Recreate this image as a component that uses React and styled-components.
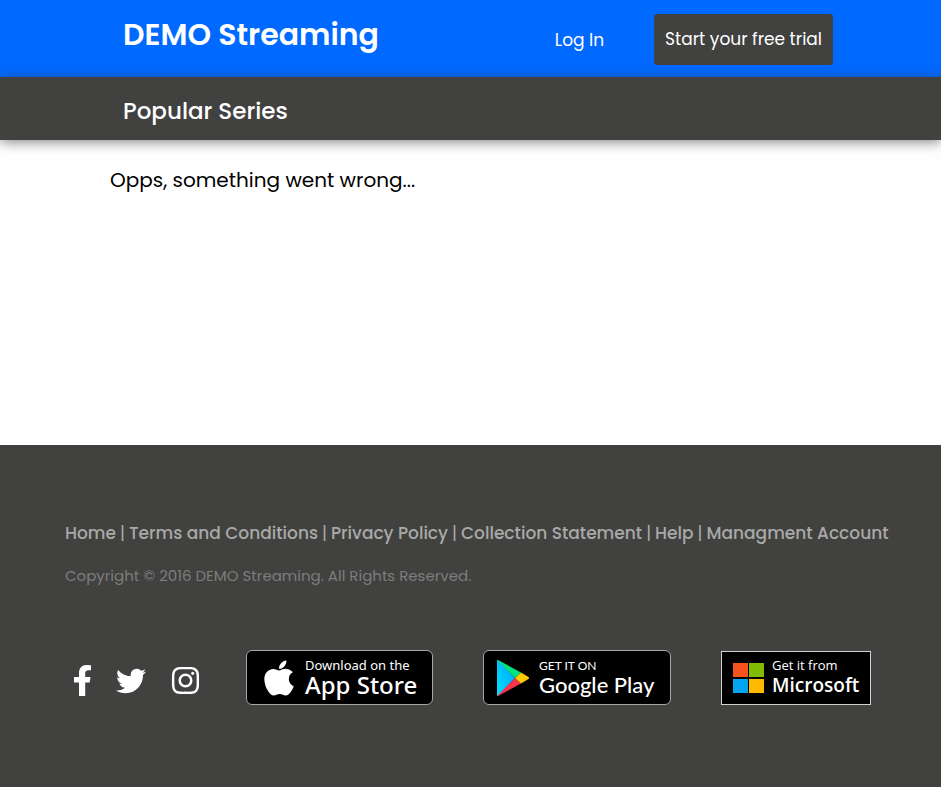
import React from "react";
import styled, { createGlobalStyle } from "styled-components";
import { FaApple, FaInstagram, FaTwitter } from "react-icons/fa";

const GlobalStyle = createGlobalStyle`
  *, *::before, *::after { box-sizing: border-box; }
  body {
    margin: 0;
    background: #fff;
    color: #000;
    font-family: Poppins, Inter, sans-serif;
  }
  #root { min-height: 100vh; display: flex; }
`;

const Page = styled.div`
  flex: 1;
  min-width: 0;
  display: flex;
  flex-direction: column;
`;

const Header = styled.header`
  display: flex;
  align-items: flex-start;
  justify-content: space-between;
  padding: 14px 108px 12px 123px;
  background: #0069ff;
  color: #fff;
`;

const Brand = styled.h1`
  margin: 0;
  font-size: 30px;
  font-weight: 600;
  line-height: 42px;
`;

const Actions = styled.nav`
  display: flex;
  align-items: center;
  gap: 50px;
`;

const LoginLink = styled.a`
  color: #fff;
  font-size: 17px;
  text-decoration: none;
`;

const TrialButton = styled.button`
  padding: 14px 11px;
  border: 0;
  border-radius: 3px;
  background: #414140;
  color: #fff;
  font: inherit;
  font-size: 17px;
  line-height: 23px;
  white-space: nowrap;
`;

const TitleBar = styled.div`
  padding: 16px 123px 11px;
  background: #414140;
  color: #fff;
  box-shadow: 0 2px 12px rgba(65, 65, 64, 0.65);
`;

const Title = styled.h2`
  margin: 0;
  font-size: 23px;
  font-weight: 500;
  line-height: 36px;
`;

const Main = styled.main`
  min-height: 305px;
  padding: 24px 110px;
`;

const Message = styled.p`
  margin: 0;
  font-size: 20px;
  line-height: 32px;
`;

const Footer = styled.footer`
  flex: 1;
  padding: 76px 50px 82px 65px;
  background: #414140;
`;

const LinkList = styled.ul`
  display: flex;
  margin: 0;
  padding: 0;
  list-style: none;
  color: #a9a9a8;
  font-size: 17px;
  line-height: 25px;
  white-space: nowrap;
`;

const LinkItem = styled.li`
  & + &::before {
    content: "|";
    margin: 0 4px;
  }
`;

const FooterLink = styled.a`
  color: inherit;
  font-weight: 500;
  text-decoration: none;
`;

const Copyright = styled.p`
  margin: 19px 0 0;
  color: #7d7d7c;
  font-size: 15px;
  line-height: 22px;
`;

const Outlets = styled.div`
  display: flex;
  align-items: center;
  gap: 45px;
  margin-top: 63px;
`;

const Socials = styled.div`
  display: flex;
  align-items: center;
  gap: 24px;
  padding: 6px 0 0 9px;
`;

const SocialLink = styled.a`
  display: flex;
  color: #fff;
`;

const Stores = styled.div`
  display: flex;
  align-items: center;
  gap: 50px;
`;

const Badge = styled.a`
  display: flex;
  align-items: center;
  gap: ${(p) => p.$gap}px;
  width: ${(p) => p.$width}px;
  height: ${(p) => (p.$square ? 54 : 55)}px;
  padding-left: ${(p) => p.$inset}px;
  border: 1px solid ${(p) => (p.$square ? "#d2d2d2" : "#a6a6a6")};
  border-radius: ${(p) => (p.$square ? 0 : 6)}px;
  background: #000;
  color: #fff;
  font-family: ${(p) => p.$font}, sans-serif;
  text-decoration: none;
  white-space: nowrap;
`;

const BadgeText = styled.span`
  display: flex;
  flex-direction: column;
`;

const BadgeLead = styled.span`
  font-size: ${(p) => p.$size}px;
  line-height: 15px;
`;

const BadgeName = styled.span`
  font-size: ${(p) => p.$size}px;
  font-weight: ${(p) => p.$weight};
  line-height: 24px;
`;

const links = [
  "Home",
  "Terms and Conditions",
  "Privacy Policy",
  "Collection Statement",
  "Help",
  "Managment Account",
];

const FacebookIcon = () => (
  <svg width="18" height="31" viewBox="0 0 18 31" fill="#fff" aria-hidden="true">
    <path d="M5 31V17.500H0V12H5V8C5 3 8 0 12.500 0C14.500 0 17 .4 17 .4V5.200H14.500C12 5.200 11.200 6.600 11.200 8.200V12H16.500L15.600 17.500H11.200V31Z" />
  </svg>
);

const PlayIcon = () => (
  <svg width="32" height="36" viewBox="0 0 32 36" aria-hidden="true">
    <defs>
      <linearGradient id="play-blue" x1="1" y1="0" x2="0" y2="1">
        <stop offset="0" stopColor="#00a0ff" />
        <stop offset="1" stopColor="#00e1ff" />
      </linearGradient>
    </defs>
    <path d="M0 1Q0 0 1 0L18 18L1 36Q0 36 0 35Z" fill="url(#play-blue)" />
    <path d="M0 0L2 .5L24 12.500L18 18Z" fill="#00e27a" />
    <path d="M0 36L2 35.500L24 23.500L18 18Z" fill="#f5344c" />
    <path d="M24 12.500L31.500 17Q32.500 18 31.500 19L24 23.500L18 18Z" fill="#ffcb00" />
  </svg>
);

const MicrosoftIcon = () => (
  <svg width="31" height="30" viewBox="0 0 31 30" aria-hidden="true">
    <rect width="15" height="14" fill="#f4511e" />
    <rect x="16" width="15" height="14" fill="#80bb03" />
    <rect y="16" width="15" height="14" fill="#03a5f0" />
    <rect x="16" y="16" width="15" height="14" fill="#ffb903" />
  </svg>
);

export default function App() {
  return (
    <>
      <GlobalStyle />
      <Page>
        <Header>
          <Brand>DEMO Streaming</Brand>
          <Actions>
            <LoginLink href="#login">Log In</LoginLink>
            <TrialButton type="button">Start your free trial</TrialButton>
          </Actions>
        </Header>
        <TitleBar>
          <Title>Popular Series</Title>
        </TitleBar>
        <Main>
          <Message>Opps, something went wrong...</Message>
        </Main>
        <Footer>
          <LinkList>
            {links.map((label) => (
              <LinkItem key={label}>
                <FooterLink href="#">{label}</FooterLink>
              </LinkItem>
            ))}
          </LinkList>
          <Copyright>Copyright © 2016 DEMO Streaming. All Rights Reserved.</Copyright>
          <Outlets>
            <Socials>
              <SocialLink href="#" aria-label="Facebook"><FacebookIcon /></SocialLink>
              <SocialLink href="#" aria-label="Twitter"><FaTwitter size={30} /></SocialLink>
              <SocialLink href="#" aria-label="Instagram"><FaInstagram size={31} /></SocialLink>
            </Socials>
            <Stores>
              <Badge href="#" $width={187} $inset={12} $gap={6} $font={'"Noto Sans"'}>
                <FaApple size={40} />
                <BadgeText>
                  <BadgeLead $size={13}>Download on the</BadgeLead>
                  <BadgeName $size={24} $weight={500}>App Store</BadgeName>
                </BadgeText>
              </Badge>
              <Badge href="#" $width={188} $inset={13} $gap={10} $font="Lato">
                <PlayIcon />
                <BadgeText>
                  <BadgeLead $size={12}>GET IT ON</BadgeLead>
                  <BadgeName $size={22} $weight={500}>Google Play</BadgeName>
                </BadgeText>
              </Badge>
              <Badge href="#" $square $width={150} $inset={11} $gap={8} $font={'"Open Sans"'}>
                <MicrosoftIcon />
                <BadgeText>
                  <BadgeLead $size={13}>Get it from</BadgeLead>
                  <BadgeName $size={19} $weight={600}>Microsoft</BadgeName>
                </BadgeText>
              </Badge>
            </Stores>
          </Outlets>
        </Footer>
      </Page>
    </>
  );
}
